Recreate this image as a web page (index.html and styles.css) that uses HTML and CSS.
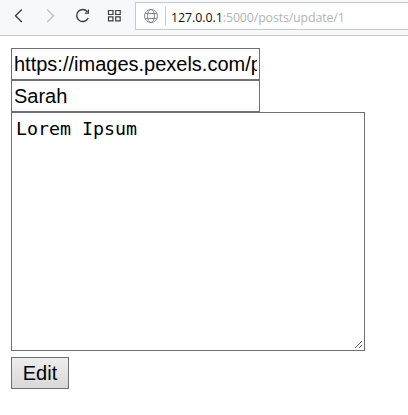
FILE: index.html
```html
<!DOCTYPE html>
<html lang="en">
<head>
<meta charset="utf-8">
<title>Update post</title>
<link rel="stylesheet" href="styles.css">
</head>
<body>
<header class="toolbar">
  <nav class="nav">
    <svg width="16" height="16" viewBox="0 0 16 16"><path d="M10.800 1.500L4.500 7.700l6.300 6.300"/></svg>
    <svg class="disabled" width="16" height="16" viewBox="0 0 16 16"><path d="M4.200 1.500l6.300 6.200L4.200 14"/></svg>
    <svg width="16" height="16" viewBox="0 0 16 16"><path d="M12.600 4A6 6 0 1 0 13.200 10"/><path class="solid" d="M14 1.500v4.300H9.800V4.600h3V1.500z"/></svg>
    <svg width="16" height="16" viewBox="0 0 16 16"><path class="thin" d="M1.500 2.500h4.500v4H1.500zM8.700 2.500h4.500v4H8.700zM1.500 8.800h4.500v4H1.500zM8.700 8.800h4.500v4H8.700z"/></svg>
  </nav>
  <div class="address">
    <svg class="globe" width="16" height="16" viewBox="0 0 16 16"><circle cx="8" cy="8" r="6.500"/><ellipse cx="8" cy="8" rx="3.500" ry="6.500"/><path d="M2.300 5.500h11.400M2.300 10.500h11.400"/></svg>
    <span class="divider"></span>
    <span class="url"><span class="host">127.0.0.1</span>:5000/posts/update/1</span>
  </div>
</header>
<form class="form">
  <input class="field" type="text" value="https://images.pexels.com/photos">
  <input class="field" type="text" value="Sarah">
  <div class="area"><textarea class="text" spellcheck="false">Lorem Ipsum</textarea>
    <svg class="grip" width="7" height="7" viewBox="0 0 7 7" shape-rendering="crispEdges"><path d="M0 6h1v1H0zM1 5h1v1H1zM2 4h1v1H2zM3 3h1v1H3zM4 2h1v1H4zM5 1h1v1H5zM6 0h1v1H6zM4 6h1v1H4zM5 5h1v1H5zM6 4h1v1H6z"/></svg>
  </div>
  <button class="button" type="button">Edit</button>
</form>
</body>
</html>
```
FILE: styles.css
```css
* { box-sizing: border-box; }
body { margin: 0; background: #fff; overflow: hidden; }
.toolbar { display: flex; height: 36px; background: #f7f8fb; border-bottom: 1px solid #c6c9ca; }
.nav { display: flex; gap: 16px; width: 135px; padding: 8px 0 0 11px; flex: none; }
.nav svg { flex: none; fill: none; stroke: #3c4043; stroke-width: 1.4; }
.nav .disabled { stroke: #bfc2c4; }
.nav .solid { fill: #3c4043; stroke: none; }
.nav .thin { stroke-width: 1.2; }
.address { display: flex; align-items: center; flex: 1; height: 28px; margin-top: 2px; padding-left: 7px; background: #fff; border: 1px solid #c6c9ca; border-right: 0; }
.globe { fill: none; stroke: #85898b; stroke-width: 1; }
.divider { width: 1px; height: 18px; margin: 0 5px 0 6px; background: #c9cccd; }
.url { font: 12.4px/18px "Open Sans", sans-serif; letter-spacing: -0.14px; color: #b3b3b3; white-space: nowrap; padding-top: 3px; }
.host { color: #111; letter-spacing: -0.05px; }
.form { display: flex; flex-direction: column; align-items: flex-start; padding: 12px 11px; }
.field { width: 249px; height: 32px; margin: 0; padding: 0 2px; border: 1px solid #707070; border-radius: 0; background: #fff; color: #000; font: 20px "Liberation Sans", Arial, sans-serif; outline: 0; }
.area { position: relative; width: 354px; height: 239px; }
.text { display: block; width: 100%; height: 100%; margin: 0; padding: 4px; border: 1px solid #707070; border-radius: 0; resize: none; overflow: hidden; color: #000; font: 18.300px/24px "DejaVu Sans Mono", monospace; outline: 0; }
.grip { position: absolute; right: 3px; bottom: 3px; fill: #666; }
.button { width: 58px; height: 32px; margin: 6px 0 0; padding: 0; border: 1px solid #707070; border-radius: 0; background: linear-gradient(#ededed, #d8d8d8); color: #000; font: 20px "Liberation Sans", Arial, sans-serif; }
```
